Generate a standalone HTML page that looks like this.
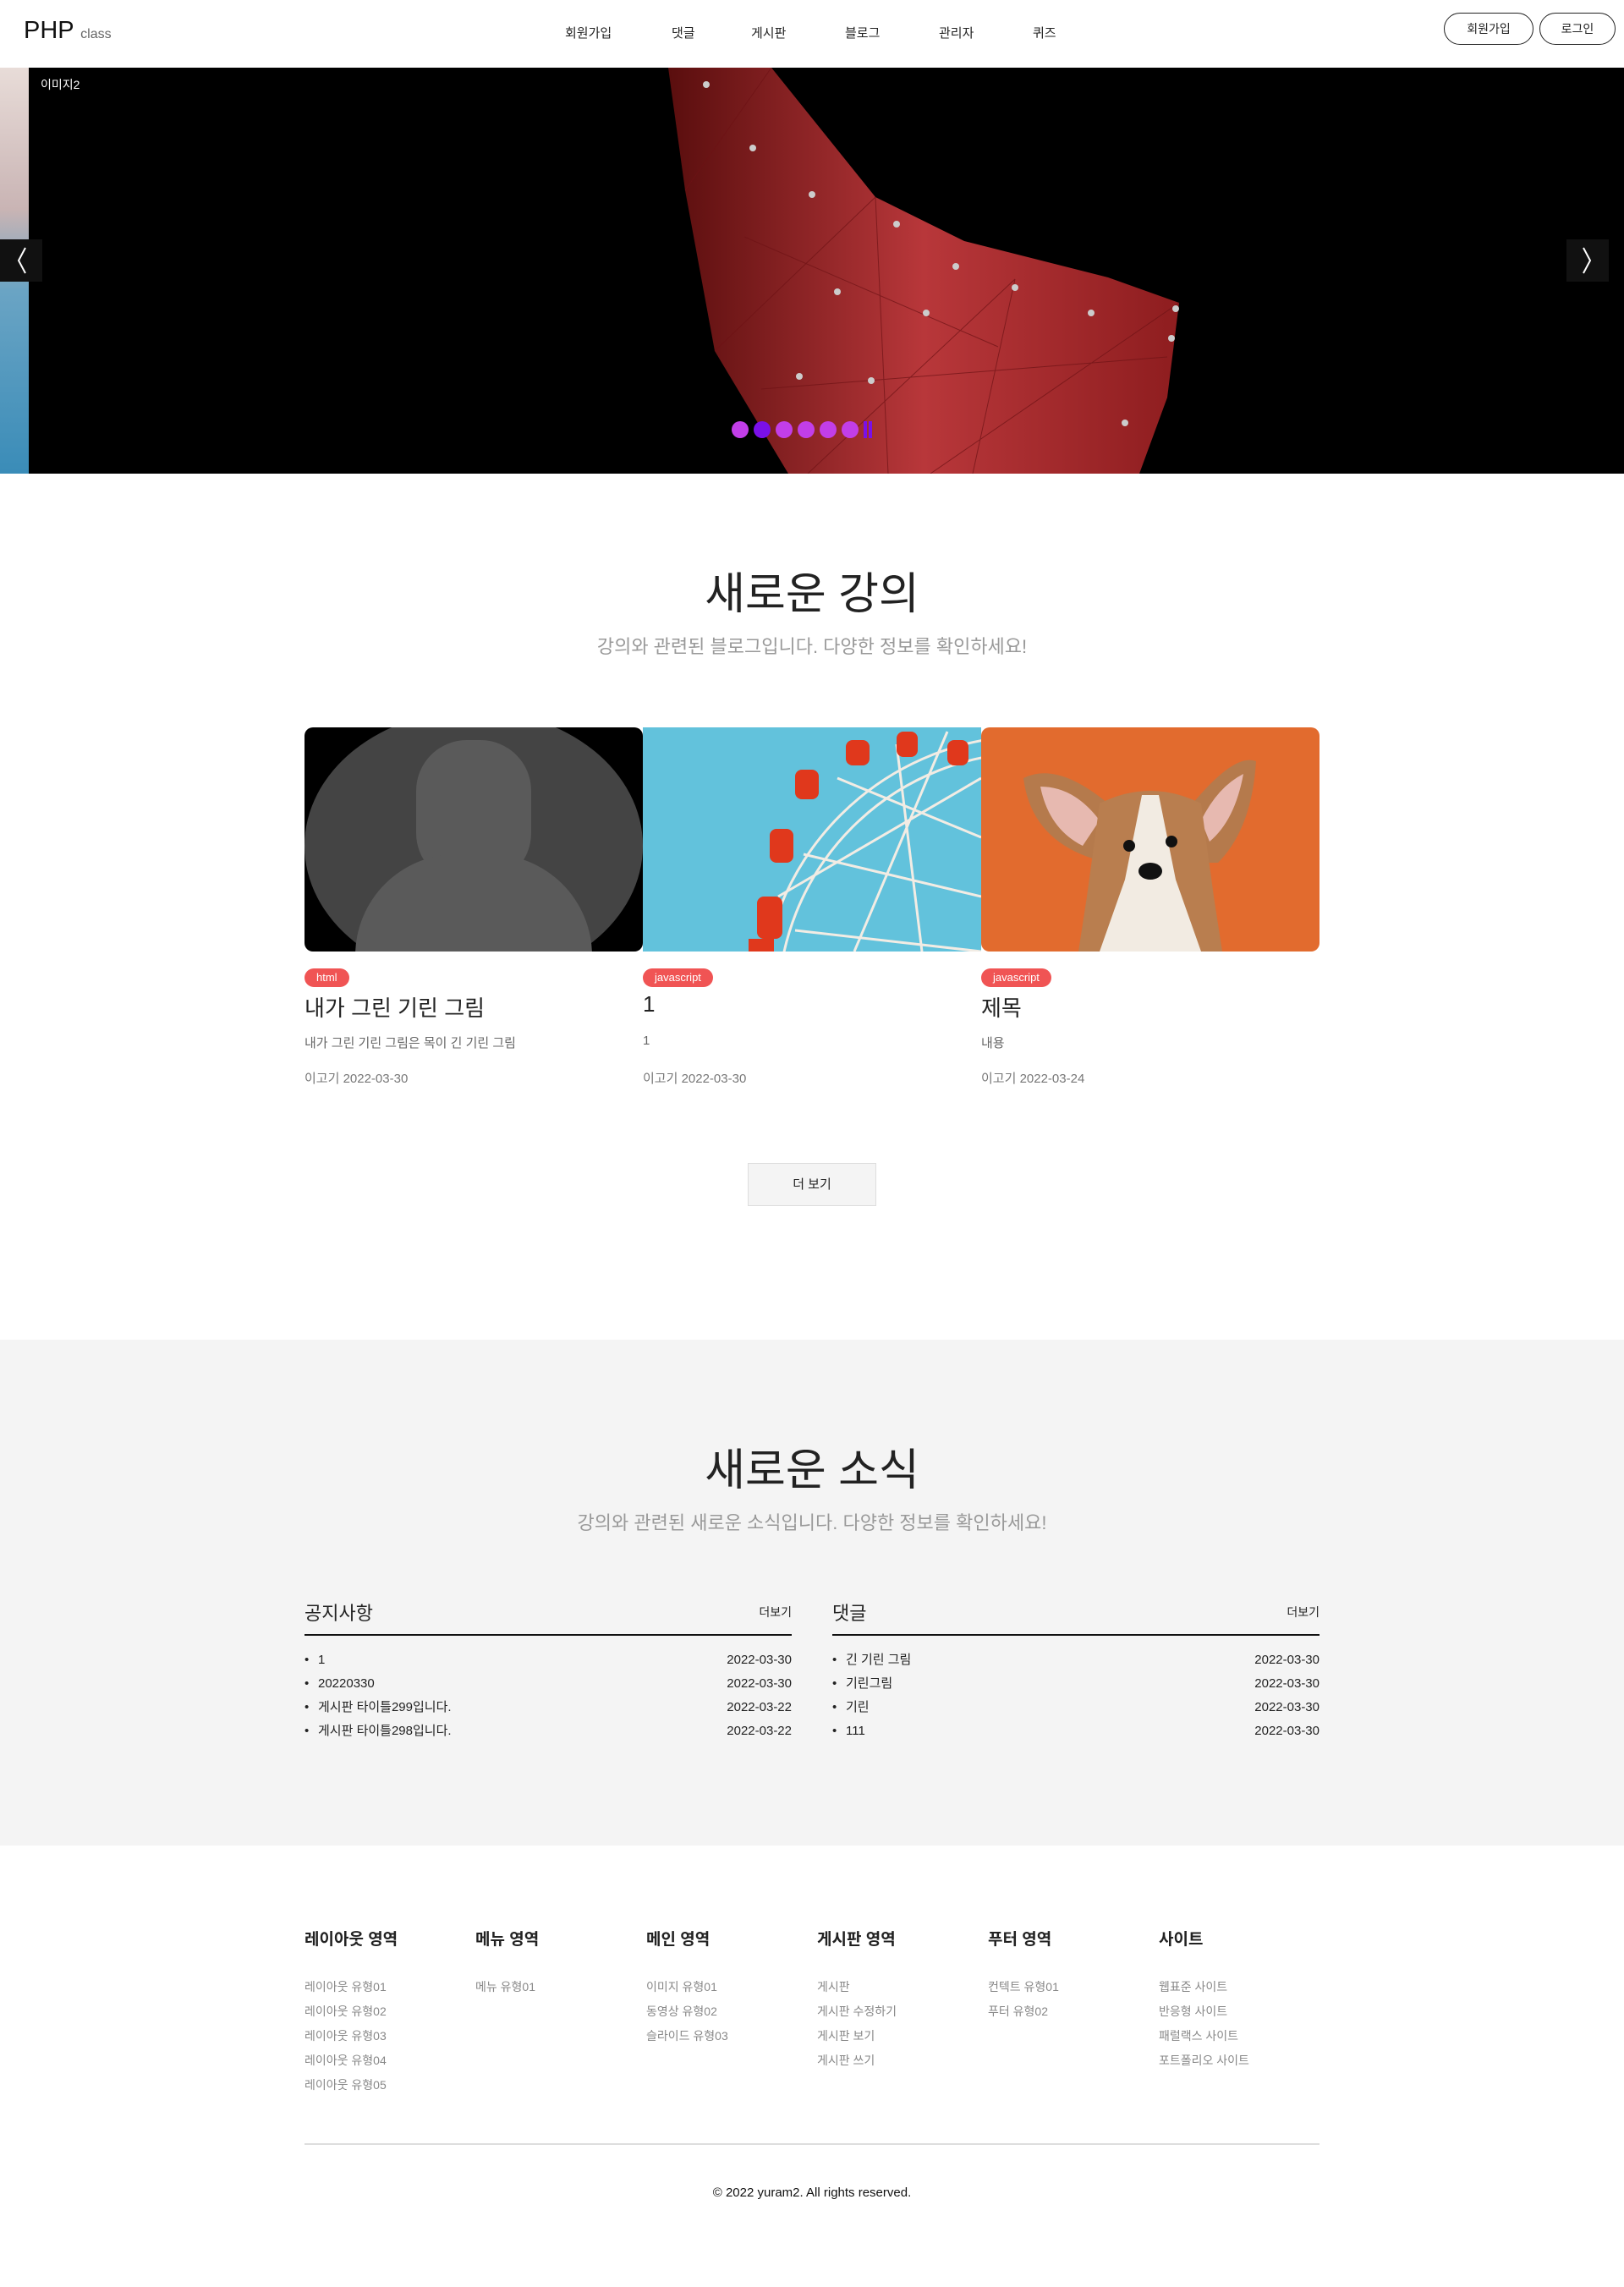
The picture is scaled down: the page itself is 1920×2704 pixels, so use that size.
<!DOCTYPE html>
<html><head><meta charset="utf-8"><style>
*{margin:0;padding:0;box-sizing:border-box}
body{width:1920px;height:2704px;font-family:"Liberation Sans","Noto Sans CJK KR",sans-serif;color:#222;background:#fff;position:relative;overflow:hidden}
.a{position:absolute}
.nav span{position:absolute;top:28px;font-size:15px;color:#222}
.btn{position:absolute;top:15px;height:38px;border:1px solid #222;border-radius:19px;font-size:14px;text-align:center;line-height:36px}
.t{position:absolute;left:0;width:1920px;text-align:center}
.card{position:absolute;top:860px;width:400px}
.card .img{height:265px;border-radius:10px;overflow:hidden;position:relative}
.tag{position:absolute;top:285px;height:22px;line-height:22px;padding:0 14px;background:#f05454;color:#fff;border-radius:11px;font-size:13px}
.ct{position:absolute;top:312px;font-size:26px;color:#222}
.cd{position:absolute;top:362px;font-size:15px;color:#666}
.cdt{position:absolute;top:404px;font-size:15px;color:#777}
.col{position:absolute;top:1890px;width:576px}
.col h3{font-size:22px;font-weight:normal;height:44px;border-bottom:2px solid #111;position:relative}
.col h3 small{position:absolute;right:0;top:6px;font-size:14px}
.col li{list-style:none;height:28px;font-size:15px;position:relative;padding-left:16px;line-height:28px}
.col li:before{content:"•";position:absolute;left:0}
.col li i{font-style:normal;position:absolute;right:0}
.col ul{margin-top:15px}
.f{position:absolute;top:2278px;width:200px}
.f h4{font-size:19px;font-weight:bold;color:#222;margin-bottom:34px}
.f p{font-size:14px;color:#888;height:29px}
</style></head><body>
<div class="a" style="left:28px;top:20px;font-size:29px;color:#111">PHP <span style="font-size:16px;color:#666">class</span></div>
<div class="nav">
<span style="left:668px">회원가입</span><span style="left:794px">댓글</span><span style="left:888px">게시판</span><span style="left:999px">블로그</span><span style="left:1110px">관리자</span><span style="left:1221px">퀴즈</span>
</div>
<div class="btn" style="left:1707px;width:106px">회원가입</div>
<div class="btn" style="left:1820px;width:90px">로그인</div>
<div class="a" style="left:0;top:80px;width:1920px;height:480px;background:#000;overflow:hidden">
<div class="a" style="left:0;top:0;width:34px;height:480px;background:linear-gradient(#e8dcd8,#c9b4b4 35%,#6aa4c4 55%,#3a8cb8)"></div>
<svg class="a" style="left:0;top:0" width="1920" height="480">
<defs><linearGradient id="r" x1="0" x2="1"><stop offset="0" stop-color="#5a0e0e"/><stop offset=".5" stop-color="#b8373a"/><stop offset="1" stop-color="#8e1d1f"/></linearGradient></defs>
<polygon points="790,0 912,0 1035,153 1140,205 1310,248 1394,278 1380,390 1347,480 932,480 845,335 810,145" fill="url(#r)"/>
<g stroke="#6e1215" stroke-width="1" fill="none" opacity=".7">
<path d="M810,145 L912,0 M845,335 L1035,153 M955,480 L1200,250 M1100,480 L1394,278 M880,200 L1180,330 M900,380 L1380,342 M1035,153 L1050,480 M1200,250 L1150,480"/></g>
<g fill="#ccc"><circle cx="835" cy="20" r="4"/><circle cx="890" cy="95" r="4"/><circle cx="960" cy="150" r="4"/><circle cx="1060" cy="185" r="4"/><circle cx="1130" cy="235" r="4"/><circle cx="1200" cy="260" r="4"/><circle cx="1290" cy="290" r="4"/><circle cx="1390" cy="285" r="4"/><circle cx="990" cy="265" r="4"/><circle cx="1095" cy="290" r="4"/><circle cx="945" cy="365" r="4"/><circle cx="1030" cy="370" r="4"/><circle cx="1330" cy="420" r="4"/><circle cx="1385" cy="320" r="4"/></g>
</svg>
<div class="a" style="left:48px;top:10px;color:#fff;font-size:14px">이미지2</div>
<div class="a" style="left:0;top:203px;width:50px;height:50px;background:#111"><svg width="50" height="50"><path d="M30,10 L22,25 L30,40" stroke="#fff" stroke-width="2" fill="none"/></svg></div>
<div class="a" style="left:1852px;top:203px;width:50px;height:50px;background:#111"><svg width="50" height="50"><path d="M20,10 L28,25 L20,40" stroke="#fff" stroke-width="2" fill="none"/></svg></div>
<div class="a" style="left:865px;top:418px;display:flex;gap:6px">
<i style="width:20px;height:20px;border-radius:50%;background:#c23ee8"></i><i style="width:20px;height:20px;border-radius:50%;background:#7a10e8"></i><i style="width:20px;height:20px;border-radius:50%;background:#c23ee8"></i><i style="width:20px;height:20px;border-radius:50%;background:#c23ee8"></i><i style="width:20px;height:20px;border-radius:50%;background:#c23ee8"></i><i style="width:20px;height:20px;border-radius:50%;background:#c23ee8"></i><i style="width:4px;height:20px;background:#7a10e8"></i><i style="width:4px;height:20px;background:#7a10e8;margin-left:-4px"></i>
</div>
</div>
<div class="t" style="top:660px;font-size:52px;color:#222">새로운 강의</div>
<div class="t" style="top:747px;font-size:22px;color:#999">강의와 관련된 블로그입니다. 다양한 정보를 확인하세요!</div>
<div class="card" style="left:360px"><div class="img" style="background:#000">
<div class="a" style="left:0;top:-20px;width:400px;height:320px;border-radius:50%;background:#444"></div>
<div class="a" style="left:132px;top:15px;width:136px;height:170px;border-radius:60px;background:#5a5a5a"></div>
<div class="a" style="left:60px;top:150px;width:280px;height:160px;border-radius:120px 120px 0 0;background:#5a5a5a"></div>
</div><span class="tag" style="left:0">html</span><div class="ct">내가 그린 기린 그림</div><div class="cd">내가 그린 기린 그림은 목이 긴 기린 그림</div><div class="cdt">이고기 2022-03-30</div></div>
<div class="card" style="left:760px"><div class="img" style="background:#62c2dc;border-radius:0">
<svg width="400" height="265"><g fill="none" stroke="#f2ece4" stroke-width="3"><circle cx="460" cy="330" r="320"/><circle cx="460" cy="330" r="300"/><path d="M180,240 L400,265 M190,150 L400,200 M230,60 L400,130 M300,20 L330,265 M360,5 L250,265 M160,200 L400,60"/></g><g fill="#e0381c"><rect x="135" y="200" width="30" height="50" rx="8"/><rect x="150" y="120" width="28" height="40" rx="8"/><rect x="180" y="50" width="28" height="35" rx="8"/><rect x="240" y="15" width="28" height="30" rx="8"/><rect x="300" y="5" width="25" height="30" rx="8"/><rect x="360" y="15" width="25" height="30" rx="8"/><rect x="125" y="250" width="30" height="20"/></g></svg>
</div><span class="tag" style="left:0">javascript</span><div class="ct">1</div><div class="cd">1</div><div class="cdt">이고기 2022-03-30</div></div>
<div class="card" style="left:1160px"><div class="img" style="background:#e26b2e">
<svg width="400" height="265"><path d="M50,60 Q90,40 150,90 L250,90 Q300,30 325,40 Q320,120 280,160 L150,160 Q60,140 50,60Z" fill="#b57a4c"/><path d="M70,70 Q110,70 140,110 L120,140 Q80,120 70,70Z M310,55 Q300,110 270,135 L260,110 Q280,70 310,55Z" fill="#e7b9b0"/><path d="M140,90 Q200,60 260,90 L275,200 L285,265 L115,265 L125,200Z" fill="#b97e4f"/><path d="M190,80 L210,80 L230,180 L260,265 L140,265 L170,180Z" fill="#f2ebe2"/><circle cx="175" cy="140" r="7" fill="#111"/><circle cx="225" cy="135" r="7" fill="#111"/><ellipse cx="200" cy="170" rx="14" ry="10" fill="#111"/></svg>
</div><span class="tag" style="left:0">javascript</span><div class="ct">제목</div><div class="cd">내용</div><div class="cdt">이고기 2022-03-24</div></div>
<div class="a" style="left:884px;top:1375px;width:152px;height:51px;background:#f4f4f4;border:1px solid #ddd;text-align:center;line-height:49px;font-size:15px">더 보기</div>
<div class="a" style="left:0;top:1584px;width:1920px;height:598px;background:#f4f4f4"></div>
<div class="t" style="top:1696px;font-size:52px;color:#222">새로운 소식</div>
<div class="t" style="top:1783px;font-size:22px;color:#999">강의와 관련된 새로운 소식입니다. 다양한 정보를 확인하세요!</div>
<div class="col" style="left:360px"><h3>공지사항<small>더보기</small></h3><ul>
<li>1<i>2022-03-30</i></li><li>20220330<i>2022-03-30</i></li><li>게시판 타이틀299입니다.<i>2022-03-22</i></li><li>게시판 타이틀298입니다.<i>2022-03-22</i></li></ul></div>
<div class="col" style="left:984px"><h3>댓글<small>더보기</small></h3><ul>
<li>긴 기린 그림<i>2022-03-30</i></li><li>기린그림<i>2022-03-30</i></li><li>기린<i>2022-03-30</i></li><li>111<i>2022-03-30</i></li></ul></div>
<div class="f" style="left:360px"><h4>레이아웃 영역</h4><p>레이아웃 유형01</p><p>레이아웃 유형02</p><p>레이아웃 유형03</p><p>레이아웃 유형04</p><p>레이아웃 유형05</p></div>
<div class="f" style="left:562px"><h4>메뉴 영역</h4><p>메뉴 유형01</p></div>
<div class="f" style="left:764px"><h4>메인 영역</h4><p>이미지 유형01</p><p>동영상 유형02</p><p>슬라이드 유형03</p></div>
<div class="f" style="left:966px"><h4>게시판 영역</h4><p>게시판</p><p>게시판 수정하기</p><p>게시판 보기</p><p>게시판 쓰기</p></div>
<div class="f" style="left:1168px"><h4>푸터 영역</h4><p>컨텍트 유형01</p><p>푸터 유형02</p></div>
<div class="f" style="left:1370px"><h4>사이트</h4><p>웹표준 사이트</p><p>반응형 사이트</p><p>패럴랙스 사이트</p><p>포트폴리오 사이트</p></div>
<div class="a" style="left:360px;top:2534px;width:1200px;height:2px;background:#ddd"></div>
<div class="t" style="top:2584px;font-size:15px;color:#111;font-weight:500">© 2022 yuram2. All rights reserved.</div>
</body></html>
